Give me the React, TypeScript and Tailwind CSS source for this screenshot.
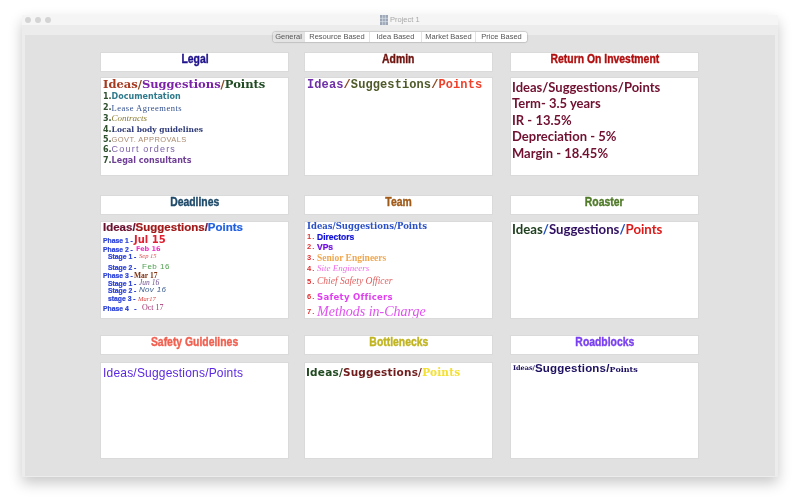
import React from "react";

const sans = "font-['Liberation_Sans',sans-serif]";
const bold = "font-['Liberation_Sans',sans-serif] font-bold [-webkit-text-stroke:0.2px]";
const wide = "font-['DejaVu_Sans',sans-serif] font-bold";
const mono = "font-['Liberation_Mono',monospace] font-bold";
const serif = "font-['Liberation_Serif',serif]";
const dserif = "font-['DejaVu_Serif',serif] font-bold";
const hand = "font-['Lato',sans-serif] font-bold";

function Head({ color, children }: { color: string; children: React.ReactNode }) {
  return (
    <div className={`h-5 bg-white border border-[#dadada] text-center text-[13px] leading-[12px] ${color}`}>
      <span className="inline-block scale-x-[0.8] font-['Liberation_Sans',sans-serif] font-bold [-webkit-text-stroke:0.4px]">
        {children}
      </span>
    </div>
  );
}

function Body({ h = "h-[99px]", className = "", children }: { h?: string; className?: string; children?: React.ReactNode }) {
  return <div className={`${h} overflow-hidden bg-white border border-[#dadada] ${className}`}>{children}</div>;
}

function Tab({ active, w, children }: { active?: boolean; w: string; children: React.ReactNode }) {
  return (
    <div className={`${w} text-center border-r border-[#e2e2e2] last:border-r-0 ${active ? "bg-[#e4e4e4]" : "bg-white"}`}>
      {children}
    </div>
  );
}

function Line({ h, className = "", children }: { h: string; className?: string; children: React.ReactNode }) {
  return <div className={`${h} whitespace-nowrap flex items-center ${className}`}>{children}</div>;
}

function Num({ n }: { n: string }) {
  return <span className="w-[10px] shrink-0 text-[7.5px] font-bold tracking-[1.2px] text-[#e03030]">{n}</span>;
}

function L({ w, children }: { w: string; children: React.ReactNode }) {
  return (
    <span className={`${w} shrink-0 whitespace-pre text-[6.8px] leading-[7px] font-bold text-[#2a40d8] [-webkit-text-stroke:0.2px]`}>
      {children}
    </span>
  );
}

export default function App() {
  return (
    <div className={`w-[800px] h-[500px] bg-white overflow-hidden pt-[15px] px-[22px] ${sans}`}>
      <div className="w-[756px] h-[462px] bg-[#ececec] rounded-t-[4px] shadow-[0_6px_14px_rgba(0,0,0,0.22)] flex flex-col blur-[0.35px]">
        <div className="h-[10px] shrink-0 bg-[#f5f5f5] flex items-center relative">
          <div className="flex gap-[4px] pl-[3px]">
            <span className="w-[6px] h-[6px] rounded-full bg-[#d4d4d4]" />
            <span className="w-[6px] h-[6px] rounded-full bg-[#d4d4d4]" />
            <span className="w-[6px] h-[6px] rounded-full bg-[#d4d4d4]" />
          </div>
          <div className="absolute left-[358px] top-0 flex items-center gap-[2px] text-[7.5px] leading-[10px] text-[#a8a8a8]">
            <svg width="8" height="10" viewBox="0 0 8 10">
              <rect width="8" height="10" fill="#9aa6b6" />
              <path d="M2.7 0V10M5.3 0V10M0 3.3H8M0 6.6H8" stroke="#e4e8ee" strokeWidth="0.6" />
            </svg>
            <span>Project 1</span>
          </div>
        </div>
        <div className="flex-1 pt-[10px] px-[3px] pb-[1px] bg-[#ececec] flex flex-col">
          <div className="flex-1 bg-[#e1e1e1] relative pt-[17px] pl-[75px]">
            <div className="absolute left-[248px] -top-[3px] h-[10px] flex rounded-[3px] overflow-hidden bg-white shadow-[0_0_1px_1px_rgba(0,0,0,0.14)] text-[7.5px] leading-[10px] text-[#555]">
              <Tab active w="w-[32px]">General</Tab>
              <Tab w="w-[65px]">Resource Based</Tab>
              <Tab w="w-[52px]">Idea Based</Tab>
              <Tab w="w-[54px]">Market Based</Tab>
              <Tab w="w-[51px]">Price Based</Tab>
            </div>

            <div className="grid grid-cols-[189px_189px_191px] gap-x-[15px]">
              <div className="flex flex-col gap-[5px] h-[143px]">
                <Head color="text-[#1f128c]">Legal</Head>
                <Body className="pl-[2px] pt-[1px]">
                  <Line h="h-[12px]" className={`text-[11.5px] ${dserif}`}>
                    <span className="text-[#a63a1f]">Ideas</span>
                    <span className="text-[#8a4a20]">/</span>
                    <span className="text-[#7b22a8]">Suggestions</span>
                    <span className="text-[#8a4a20]">/</span>
                    <span className="text-[#1f4a22]">Points</span>
                  </Line>
                  <Line h="h-[12px]" className={`text-[8px] ${wide}`}><span className="text-[#2f4f2f]">1.</span><span className="text-[#2f7a8c]">Documentation</span></Line>
                  <Line h="h-[10px]" className={`text-[8.5px] tracking-[0.5px] ${serif}`}><span className={`text-[#2f4f2f] text-[8px] tracking-normal ${wide}`}>2.</span><span className="text-[#33508f]">Lease Agreements</span></Line>
                  <Line h="h-[12px]" className={`text-[9px] ${serif}`}><span className={`text-[#2f4f2f] text-[8px] ${wide}`}>3.</span><span className="text-[#8a7a30] italic">Contracts</span></Line>
                  <Line h="h-[10px]" className={`text-[7.5px] ${dserif}`}><span className={`text-[#2f4f2f] text-[8px] ${wide}`}>4.</span><span className="text-[#2e3a78]">Local body guidelines</span></Line>
                  <Line h="h-[10px]" className={`text-[7.5px] tracking-[0.4px] ${sans}`}><span className={`text-[#2f4f2f] text-[8px] tracking-normal ${wide}`}>5.</span><span className="text-[#a88a70]">GOVT. APPROVALS</span></Line>
                  <Line h="h-[10px]" className="text-[9px] tracking-[1.2px]"><span className={`text-[#2f4f2f] text-[8px] tracking-normal ${wide}`}>6.</span><span className="text-[#7a5fa8]">Court orders</span></Line>
                  <Line h="h-[12px]" className={`text-[8px] ${wide}`}><span className="text-[#2f4f2f]">7.</span><span className="text-[#6f3f96]">Legal consultants</span></Line>
                </Body>
              </div>
              <div className="flex flex-col gap-[5px] h-[143px]">
                <Head color="text-[#6e1410]">Admin</Head>
                <Body className="pl-[2px] pt-[1px]">
                  <Line h="h-[12px]" className={`text-[12px] tracking-[0.1px] ${mono}`}>
                    <span className="text-[#6f2fa8]">Ideas</span>
                    <span className="text-[#8a4a20]">/</span>
                    <span className="text-[#4f5a2a]">Suggestions</span>
                    <span className="text-[#8a4a20]">/</span>
                    <span className="text-[#f0402a]">Points</span>
                  </Line>
                </Body>
              </div>
              <div className="flex flex-col gap-[5px] h-[143px] pl-[2px]">
                <Head color="text-[#b01010]">Return On Investment</Head>
                <Body className={`pl-[1px] pt-[1px] text-[13px] text-[#701030] ${hand}`}>
                  <Line h="h-[17px]">Ideas/Suggestions/Points</Line>
                  <Line h="h-[16px]">Term- 3.5 years</Line>
                  <Line h="h-[17px]">IR - 13.5%</Line>
                  <Line h="h-[16px]">Depreciation - 5%</Line>
                  <Line h="h-[17px]">Margin - 18.45%</Line>
                </Body>
              </div>

              <div className="flex flex-col gap-[6px] h-[140px]">
                <Head color="text-[#1f4a6a]">Deadlines</Head>
                <Body h="h-[98px]" className="pl-[2px] pt-[1px]">
                  <Line h="h-[10px]" className={`text-[11.5px] ${bold}`}>
                    <span className="text-[#6a1030]">Ideas/</span>
                    <span className="text-[#a01818]">Suggestions</span>
                    <span className="text-[#6a1030]">/</span>
                    <span className="text-[#2060e0]">Points</span>
                  </Line>
                  <div>
                    <Line h="h-[10px] mt-[2px]"><L w="w-[31px]">Phase 1 -</L><span className={`text-[10px] leading-[10px] text-[#e02030] ${wide}`}>Jul 15</span></Line>
                    <Line h="h-[8px]"><L w="w-[33px]">Phase 2 -</L><span className={`text-[6.5px] leading-[7px] text-[#f030c0] ${wide}`}>Feb 16</span></Line>
                    <Line h="h-[6px]" className="pl-[5px]"><L w="w-[31px]">Stage 1 -</L><span className={`text-[6.5px] leading-[6px] italic text-[#e05050] ${serif}`}>Sep 15</span></Line>
                    <Line h="h-[12px] mt-[2px]" className="pl-[5px]"><L w="w-[34px]">Stage 2 -</L><span className="text-[8px] leading-[8px] tracking-[0.5px] text-[#50a050]">Feb 16</span></Line>
                    <Line h="h-[4px]"><L w="w-[31px]">Phase 3 -</L><span className={`text-[7.5px] leading-[7px] font-bold text-[#803010] ${serif}`}>Mar 17</span></Line>
                    <Line h="h-[8px] mt-[2px]" className="pl-[5px]"><L w="w-[31px]">Stage 1 -</L><span className={`text-[7.5px] leading-[6px] italic text-[#705090] ${serif}`}>Jun 16</span></Line>
                    <Line h="h-[6px]" className="pl-[5px]"><L w="w-[31px]">Stage 2 -</L><span className="text-[8px] leading-[6px] italic tracking-[0.3px] text-[#406090]">Nov 16</span></Line>
                    <Line h="h-[10px]" className="pl-[5px]"><L w="w-[30px]">stage 3 -</L><span className={`text-[6.5px] leading-[7px] italic text-[#e04040] ${serif}`}>Mar17</span></Line>
                    <Line h="h-[10px]"><L w="w-[39px]">{"Phase 4   -"}</L><span className={`text-[8px] leading-[8px] text-[#a03070] ${serif}`}>Oct 17</span></Line>
                  </div>
                </Body>
              </div>
              <div className="flex flex-col gap-[6px] h-[140px]">
                <Head color="text-[#a05a18]">Team</Head>
                <Body h="h-[98px]" className="pl-[2px]">
                  <Line h="h-[9px]" className={`text-[8.5px] text-[#2a50c8] ${dserif}`}>Ideas/Suggestions/Points</Line>
                  <Line h="h-[10px] mt-[1px]"><Num n="1." /><span className={`text-[8.5px] text-[#1010d8] ${bold}`}>Directors</span></Line>
                  <Line h="h-[10px]"><Num n="2." /><span className={`text-[8.5px] text-[#7010e0] ${bold}`}>VPs</span></Line>
                  <Line h="h-[12px]"><Num n="3." /><span className={`text-[9.5px] font-bold text-[#f0a850] ${serif}`}>Senior Engineers</span></Line>
                  <Line h="h-[10px]"><Num n="4." /><span className={`text-[9px] italic text-[#f070e8] ${serif}`}>Site Engineers</span></Line>
                  <Line h="h-[15px]"><Num n="5." /><span className={`text-[9.5px] italic text-[#e06060] ${serif}`}>Chief Safety Officer</span></Line>
                  <Line h="h-[16px]"><Num n="6." /><span className={`text-[8.5px] tracking-[0.3px] text-[#e040f0] ${wide}`}>Safety Officers</span></Line>
                  <Line h="h-[13px]"><Num n="7." /><span className={`text-[14px] leading-[13px] italic text-[#e050f0] ${serif}`}>Methods in-Charge</span></Line>
                </Body>
              </div>
              <div className="flex flex-col gap-[6px] h-[140px] pl-[2px]">
                <Head color="text-[#4f7a28]">Roaster</Head>
                <Body h="h-[98px]" className="pl-[1px] pt-[1px]">
                  <Line h="h-[13px]" className={`text-[13.2px] ${hand}`}>
                    <span className="text-[#204020]">Ideas</span>
                    <span className="text-[#2050c0]">/</span>
                    <span className="text-[#301060]">Suggestions</span>
                    <span className="text-[#2050c0]">/</span>
                    <span className="text-[#e01818]">Points</span>
                  </Line>
                </Body>
              </div>

              <div className="flex flex-col gap-[7px]">
                <Head color="text-[#f06050]">Safety Guidelines</Head>
                <Body h="h-[97px]" className="pl-[2px] pt-[1px]">
                  <Line h="h-[18px]" className="text-[12px] tracking-[0.2px] text-[#5a28e0]">Ideas/Suggestions/Points</Line>
                </Body>
              </div>
              <div className="flex flex-col gap-[7px]">
                <Head color="text-[#c0b420]">Bottlenecks</Head>
                <Body h="h-[97px]" className="pl-[1px] pt-[1px]">
                  <Line h="h-[18px]" className={`text-[10.5px] tracking-[0.2px] ${wide}`}>
                    <span className="text-[#204a20]">Ideas/</span>
                    <span className="text-[#701c1c]">Suggestions/</span>
                    <span className={`text-[#f4e030] ${dserif}`}>Points</span>
                  </Line>
                </Body>
              </div>
              <div className="flex flex-col gap-[7px] pl-[2px]">
                <Head color="text-[#7a40f0]">Roadblocks</Head>
                <Body h="h-[97px]" className="pl-[2px]">
                  <Line h="h-[12px]" className="text-[#1c1060] font-bold">
                    <span className={`text-[6.5px] ${dserif}`}>Ideas/</span>
                    <span className="text-[11.5px] tracking-[0.2px]">Suggestions/</span>
                    <span className={`text-[8px] ${dserif}`}>Points</span>
                  </Line>
                </Body>
              </div>
            </div>
          </div>
        </div>
      </div>
    </div>
  );
}
